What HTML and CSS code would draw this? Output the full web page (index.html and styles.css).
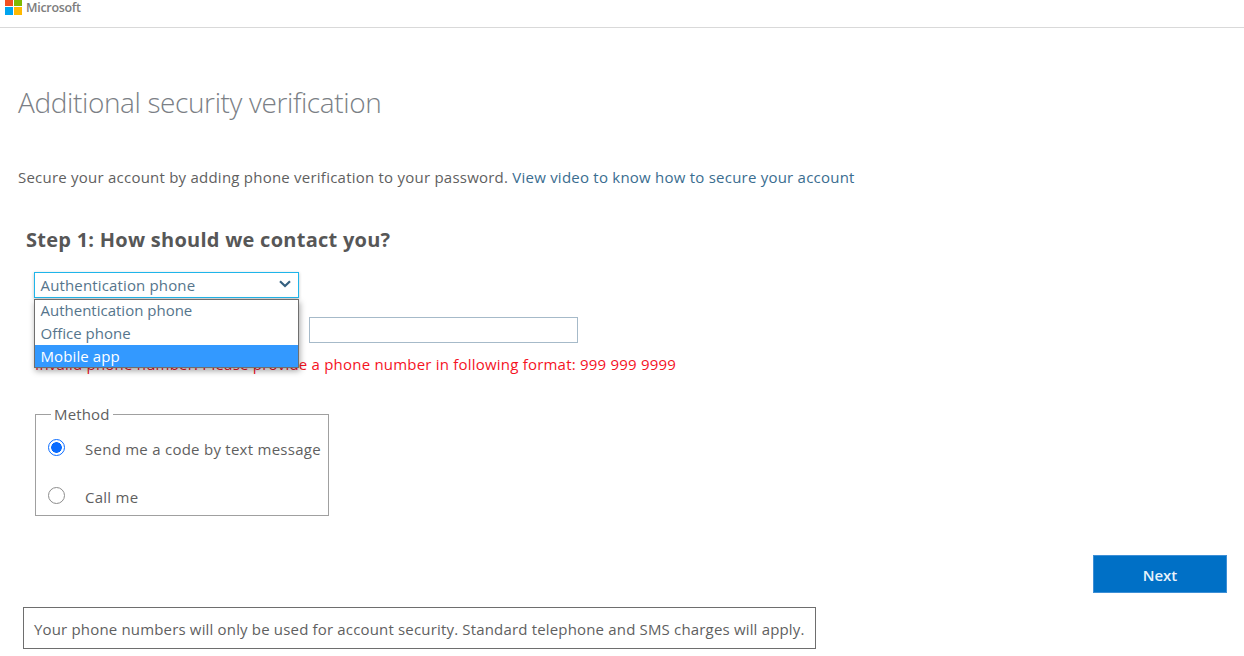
FILE: index.html
```html
<!DOCTYPE html>
<html lang="en">
<head>
<meta charset="utf-8">
<title>Additional security verification</title>
<link rel="stylesheet" href="styles.css">
</head>
<body>
<header class="topbar">
  <div class="brand">
    <svg class="logo" width="17" height="17" viewBox="0 0 17 17" aria-hidden="true">
      <rect x="0" y="0" width="8" height="8" fill="#f25022"/>
      <rect x="9" y="0" width="8" height="8" fill="#7fba00"/>
      <rect x="0" y="9" width="8" height="8" fill="#00a4ef"/>
      <rect x="9" y="9" width="8" height="8" fill="#ffb900"/>
    </svg>
    <span class="brand-name">Microsoft</span>
  </div>
</header>
<main class="page">
  <h1 class="title">Additional security verification</h1>
  <p class="intro">Secure your account by adding phone verification to your password. <a class="link" href="#">View video to know how to secure your account</a></p>
  <section class="step">
    <h2 class="step-title">Step 1: How should we contact you?</h2>
    <div class="contact">
      <div class="select">
        <span>Authentication phone</span>
        <svg class="chevron" width="12" height="8" viewBox="0 0 12 8" aria-hidden="true"><path d="M1 1.2 6 6l5-4.800" fill="none" stroke="#35607f" stroke-width="2.200"/></svg>
      </div>
      <ul class="menu">
        <li class="menu-item">Authentication phone</li>
        <li class="menu-item">Office phone</li>
        <li class="menu-item active">Mobile app</li>
      </ul>
      <div class="phone-row">
        <div class="country"></div>
        <input class="phone" type="text" aria-label="Phone number">
      </div>
      <p class="error">Invalid phone number. Please provide a phone number in following format: 999 999 9999</p>
    </div>
    <fieldset class="method">
      <legend class="method-legend">Method</legend>
      <label class="option first"><span class="radio checked"></span><span>Send me a code by text message</span></label>
      <label class="option"><span class="radio"></span><span>Call me</span></label>
    </fieldset>
  </section>
  <div class="actions"><button class="next" type="button">Next</button></div>
  <p class="notice">Your phone numbers will only be used for account security. Standard telephone and SMS charges will apply.</p>
</main>
</body>
</html>
```
FILE: styles.css
```css
* { box-sizing: border-box; }
html, body { margin: 0; height: 656px; overflow: hidden; background: #fff; }
body { font-family: "Open Sans", "Noto Sans", sans-serif; font-size: 15px; color: #5f5f5f; }
.topbar { height: 28px; border-bottom: 1px solid #d9d9d9; overflow: hidden; }
.brand { display: flex; align-items: flex-start; gap: 4px; margin: -2px 0 0 5px; }
.logo { flex: none; }
.brand-name { padding-top: 2px; font-size: 12.5px; font-weight: 600; line-height: 16px; color: #7d7d7d; letter-spacing: -0.3px; }
.title { margin: 55px 0 0 18px; font-size: 28px; line-height: 38px; font-weight: 300; color: #7b7f86; letter-spacing: -0.38px; }
.intro { margin: 46px 0 0 18px; line-height: 20px; letter-spacing: 0.23px; white-space: nowrap; }
.link { color: #3a6d90; text-decoration: none; }
.step { margin: 40px 0 0; }
.step-title { margin: 0 0 0 26px; font-size: 20px; line-height: 26px; font-weight: 700; color: #575757; letter-spacing: 0.26px; }
.contact { position: relative; margin: 19px 0 0 34px; }
.select { display: flex; justify-content: space-between; align-items: center; width: 265px; height: 26px; padding: 0 7px 0 5.500px; border: 1px solid #1fb5ea; color: #55758c; letter-spacing: 0.15px; box-shadow: 0 1px 3px rgba(0, 0, 0, 0.25); }
.chevron { flex: none; margin-top: -2px; }
.menu { position: absolute; left: 0; top: 27px; z-index: 2; width: 265px; height: 69px; margin: 0; padding: 0; list-style: none; background: #fff; border: 1px solid #6f6f6f; box-shadow: 1px 3px 6px rgba(0, 0, 0, 0.35); }
.menu-item { height: 22.330px; padding-left: 5.500px; line-height: 22px; color: #55758c; }
.menu-item:first-child { line-height: 21px; }
.menu-item.active { background: #3399ff; color: #fff; letter-spacing: 0.1px; }
.phone-row { display: flex; gap: 10px; margin-top: 19px; }
.country { width: 265px; height: 26px; border: 1px solid #c8d3dc; }
.phone { width: 269px; height: 26px; padding: 0 6px; border: 1px solid #a6bac9; background: #fff; }
.error { margin: 11px 0 0 1px; line-height: 20px; color: #f5131f; letter-spacing: 0.21px; white-space: nowrap; }
.method { display: flex; flex-direction: column; width: 294px; height: 112px; margin: 30px 0 0 35px; padding: 0 0 0 12px; border: 1px solid #a0a0a0; }
.method-legend { padding: 0 3px; margin-left: 3px; line-height: 20px; letter-spacing: 0.15px; }
.option { display: flex; align-items: center; gap: 20px; height: 24px; white-space: nowrap; letter-spacing: 0.26px; }
.option.first { margin-top: 13px; margin-bottom: 24px; }
.radio { flex: none; width: 17px; height: 17px; margin-bottom: 4px; border: 1.500px solid #8d8d8d; border-radius: 50%; background: #fff; }
.radio.checked { border-color: #0a6cff; background: radial-gradient(circle, #0a6cff 0, #0a6cff 5px, #fff 5.600px); }
.actions { display: flex; justify-content: flex-end; margin: 39px 17px 0 0; }
.next { width: 134px; height: 38px; padding-top: 3px; border: 1px solid #3d8fd6; background: #0070c6; color: #e8f3fb; font-family: inherit; font-size: 15px; font-weight: 600; }
.notice { width: 793px; height: 42px; margin: 14px 0 0 23px; padding: 0 0 0 10px; border: 1px solid #6e6e6e; line-height: 42px; white-space: nowrap; letter-spacing: 0.17px; }
```
